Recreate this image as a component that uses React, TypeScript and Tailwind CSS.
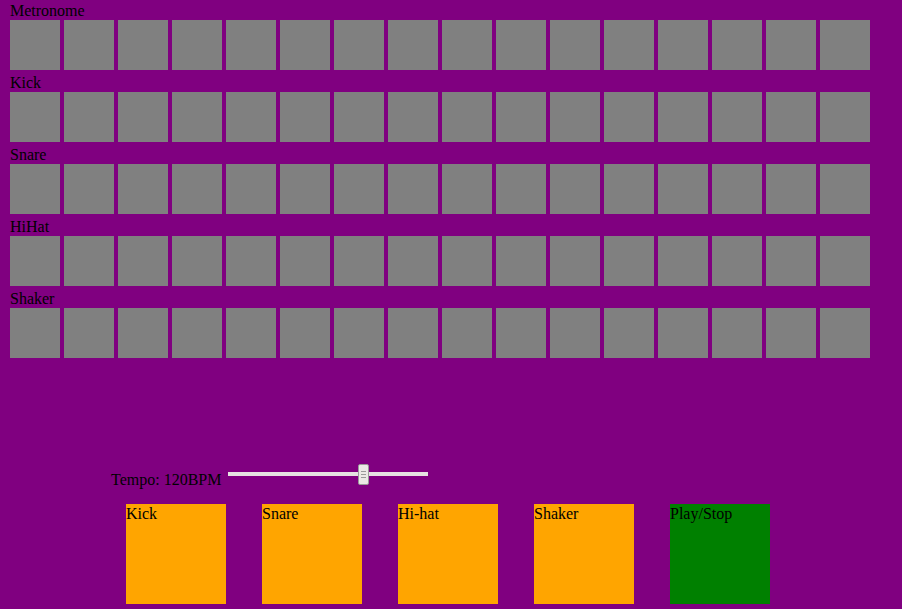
const tracks = ['Metronome', 'Kick', 'Snare', 'HiHat', 'Shaker'];
const steps = Array.from({ length: 16 }, (_, i) => i);

const pads = [
  { name: 'Kick', color: 'bg-[#ffa500]' },
  { name: 'Snare', color: 'bg-[#ffa500]' },
  { name: 'Hi-hat', color: 'bg-[#ffa500]' },
  { name: 'Shaker', color: 'bg-[#ffa500]' },
  { name: 'Play/Stop', color: 'bg-[#008000]' },
];

function TempoSlider() {
  return (
    <div className="relative w-[200px] h-[21px]">
      {/* track */}
      <div className="absolute left-0 right-0 top-[8px] h-[4px] bg-[#e6e2e2]" />
      {/* thumb */}
      <div className="absolute left-[130px] top-0 w-[11px] h-[21px] bg-[#ebe9e6] border border-[#9a9a9a] rounded-[2px] flex flex-col items-center justify-center gap-[2px]">
        <div className="w-[5px] h-px bg-[#9a9a9a]" />
        <div className="w-[5px] h-px bg-[#9a9a9a]" />
        <div className="w-[5px] h-px bg-[#9a9a9a]" />
      </div>
    </div>
  );
}

export default function App() {
  return (
    <div className="w-full h-[609px] bg-[#800080] text-black text-[16px] leading-[18px] font-['Liberation_Serif',serif] overflow-hidden">
      {/* Sequencer grid */}
      <div className="px-[10px]">
        {tracks.map((track) => (
          <div key={track}>
            <div className="h-[20px] pt-[2px]">{track}</div>
            <div className="flex gap-[4px] pb-[2px]">
              {steps.map((s) => (
                <div key={s} className="w-[50px] h-[50px] bg-[#808080]" />
              ))}
            </div>
          </div>
        ))}
      </div>

      {/* Tempo */}
      <div className="mt-[104px] pl-[111px] flex items-start h-[24px]">
        <span className="pt-[7px] w-[117px] whitespace-nowrap">Tempo: 120BPM</span>
        <TempoSlider />
      </div>

      {/* Pads */}
      <div className="mt-[16px] pl-[126px] flex gap-[36px]">
        {pads.map((pad) => (
          <div key={pad.name} className={`w-[100px] h-[100px] pt-[1px] ${pad.color}`}>
            {pad.name}
          </div>
        ))}
      </div>
    </div>
  );
}
